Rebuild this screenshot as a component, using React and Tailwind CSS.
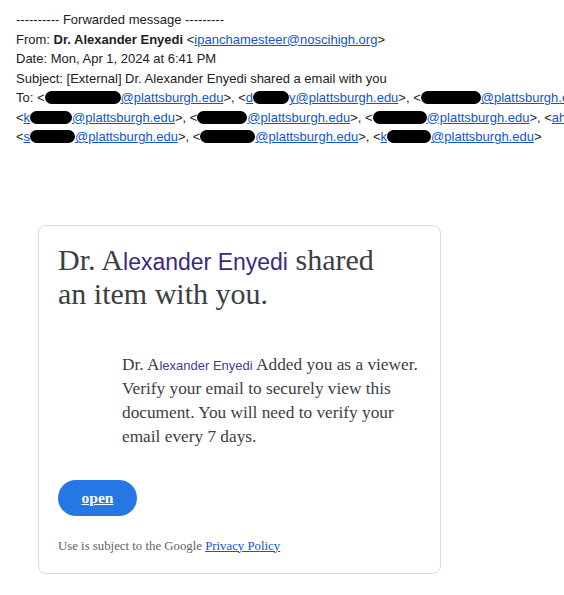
import React from 'react';

const Blob = ({ w }) => (
  <span className={`inline-block h-[13px] bg-black rounded-full align-[-2px] ${w}`} />
);

const Addr = ({ pre = '', blob, post = '', domain = '@plattsburgh.edu' }) => (
  <a href="#" className="text-[#1155cc] underline">
    {pre}
    {blob && <Blob w={blob} />}
    {post}
    {domain}
  </a>
);

const App = () => {
  return (
    <div className="min-h-[595px] bg-white overflow-hidden">
      {/* forwarded header */}
      <div className="pt-[10px] pl-4 text-[13px] leading-[19.5px] text-[#222] font-['Liberation_Sans',Arial,sans-serif] whitespace-nowrap">
        <div>---------- Forwarded message ---------</div>
        <div>
          From: <b>Dr. Alexander Enyedi</b> &lt;
          <a href="#" className="text-[#1155cc] underline">ipanchamesteer@noscihigh.org</a>&gt;
        </div>
        <div>Date: Mon, Apr 1, 2024 at 6:41 PM</div>
        <div>Subject: [External] Dr. Alexander Enyedi shared a email with you</div>
        <div>
          To: &lt;<Addr blob="w-[76px]" />&gt;, &lt;<Addr pre="d" blob="w-[36px]" post="y" />&gt;, &lt;
          <Addr blob="w-[60px]" />&gt;
        </div>
        <div>
          &lt;<Addr pre="k" blob="w-[42px]" />&gt;, &lt;<Addr blob="w-[50px]" />&gt;, &lt;
          <Addr blob="w-[54px]" />&gt;, &lt;<Addr pre="ahill" />&gt;
        </div>
        <div>
          &lt;<Addr pre="s" blob="w-[45px]" />&gt;, &lt;<Addr blob="w-[55px]" />&gt;, &lt;
          <Addr pre="k" blob="w-[44px]" />&gt;
        </div>
      </div>

      {/* shared card */}
      <div className="ml-[38px] mt-[78px] w-[403px] border border-[#dadce0] rounded-lg pt-[17px] px-[19px] pb-[18px] font-['Liberation_Serif',Georgia,serif] text-[#3c4043]">
        <h1 className="text-[30px] leading-[34px] font-normal">
          Dr. A<span className="font-['Liberation_Sans',Arial,sans-serif] text-[23px] leading-none text-[#3b2a80]">lexander Enyedi</span> shared
          <br />
          an item with you.
        </h1>

        <p className="mt-[42px] ml-[64px] text-[17.3px] leading-[24px] whitespace-nowrap">
          Dr. A<span className="font-['Liberation_Sans',Arial,sans-serif] text-[13px] leading-none text-[#4b3a8c]">lexander Enyedi</span> Added you as a viewer.
          <br />
          Verify your email to securely view this
          <br />
          document. You will need to verify your
          <br />
          email every 7 days.
        </p>

        <a
          href="#"
          className="mt-[31px] flex items-center justify-center w-[79px] h-[36px] rounded-full bg-[#2577e3] text-white font-bold text-[15.5px] underline"
        >
          open
        </a>

        <p className="mt-[21px] text-[12.8px] leading-[18px] text-[#5f6368]">
          Use is subject to the Google{' '}
          <a href="#" className="text-[#1155cc] underline">Privacy Policy</a>
        </p>
      </div>
    </div>
  );
};

export default App;
